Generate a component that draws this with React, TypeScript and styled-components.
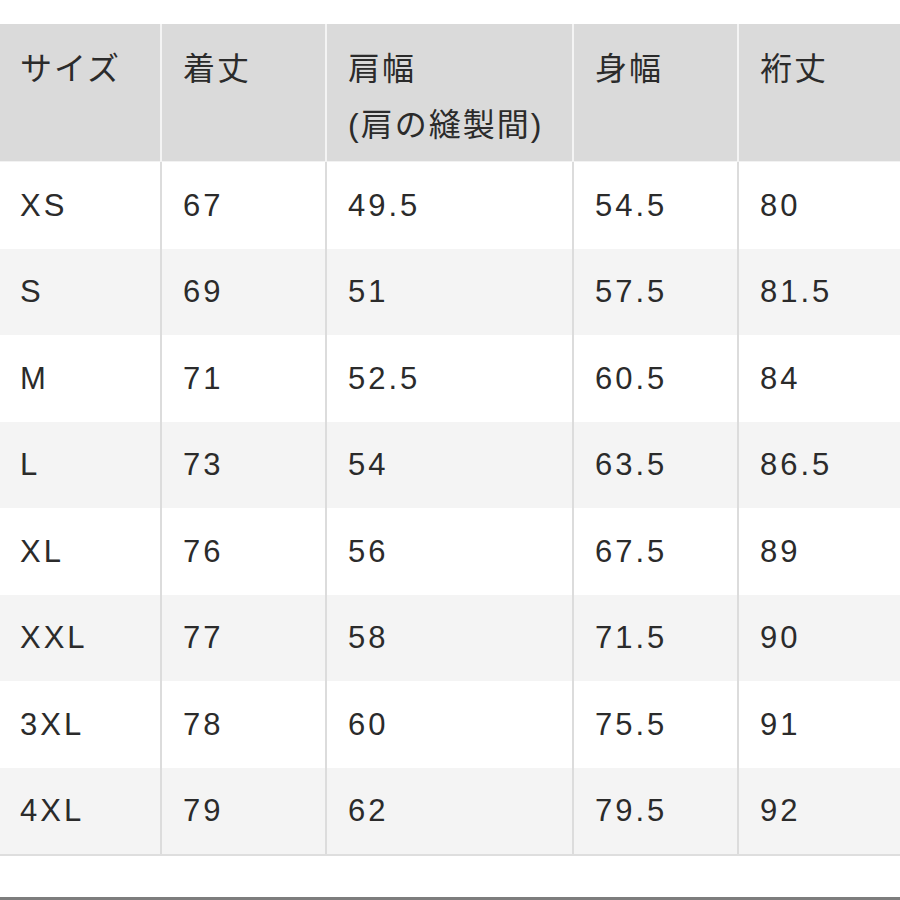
import React from "react";
import styled, { createGlobalStyle } from "styled-components";

const Global = createGlobalStyle`
  *, *::before, *::after { box-sizing: border-box; }
  html, body { margin: 0; padding: 0; background: #ffffff; }
  body {
    font-family: "Liberation Sans", "Noto Sans CJK JP", sans-serif;
    color: #2b2b2b;
  }
`;

const Page = styled.div`
  width: 900px;
  height: 900px;
  padding-top: 24px;
  display: flex;
  flex-direction: column;
  overflow: hidden;
`;

const Table = styled.table`
  width: 900px;
  table-layout: fixed;
  border-collapse: separate;
  border-spacing: 0;
  font-size: 31px;
  letter-spacing: 3px;
  border-bottom: 2px solid #dedede;
`;

const HeadCell = styled.th<{ $w: number; $first?: boolean }>`
  width: ${(p) => p.$w}px;
  height: 138px;
  background: #dadada;
  border-left: ${(p) => (p.$first ? "none" : "2px solid #f4f4f4")};
  border-bottom: 1px solid #f2f2f2;
  padding: 17px 0 0 ${(p) => (p.$first ? 20 : 21)}px;
  vertical-align: top;
  text-align: left;
  font-weight: normal;
  font-size: 32px;
  letter-spacing: 2px;
  line-height: 56px;
  white-space: nowrap;
`;

const Row = styled.tr<{ $alt: boolean }>`
  height: 86.5px;
  background: ${(p) => (p.$alt ? "#f4f4f4" : "#ffffff")};
`;

const Cell = styled.td<{ $first?: boolean }>`
  border-left: ${(p) => (p.$first ? "none" : "2px solid #dcdcdc")};
  padding: 0 0 0 ${(p) => (p.$first ? 20 : 21)}px;
  vertical-align: middle;
  line-height: 1;
  white-space: nowrap;
`;

const Spacer = styled.div`
  flex: 1;
`;

const BottomBar = styled.div`
  height: 3px;
  background: #7d7d7d;
`;

const widths = [160, 165, 247, 165, 163];

const headers: React.ReactNode[] = [
  "サイズ",
  "着丈",
  <>
    肩幅
    <br />
    (肩の縫製間)
  </>,
  "身幅",
  "裄丈",
];

const rows: string[][] = [
  ["XS", "67", "49.5", "54.5", "80"],
  ["S", "69", "51", "57.5", "81.5"],
  ["M", "71", "52.5", "60.5", "84"],
  ["L", "73", "54", "63.5", "86.5"],
  ["XL", "76", "56", "67.5", "89"],
  ["XXL", "77", "58", "71.5", "90"],
  ["3XL", "78", "60", "75.5", "91"],
  ["4XL", "79", "62", "79.5", "92"],
];

export default function App() {
  return (
    <Page>
      <Global />
      <Table>
        <thead>
          <tr>
            {headers.map((h, i) => (
              <HeadCell key={i} $w={widths[i]} $first={i === 0}>
                {h}
              </HeadCell>
            ))}
          </tr>
        </thead>
        <tbody>
          {rows.map((r, ri) => (
            <Row key={ri} $alt={ri % 2 === 1}>
              {r.map((c, ci) => (
                <Cell key={ci} $first={ci === 0}>
                  {c}
                </Cell>
              ))}
            </Row>
          ))}
        </tbody>
      </Table>
      <Spacer />
      <BottomBar />
    </Page>
  );
}
